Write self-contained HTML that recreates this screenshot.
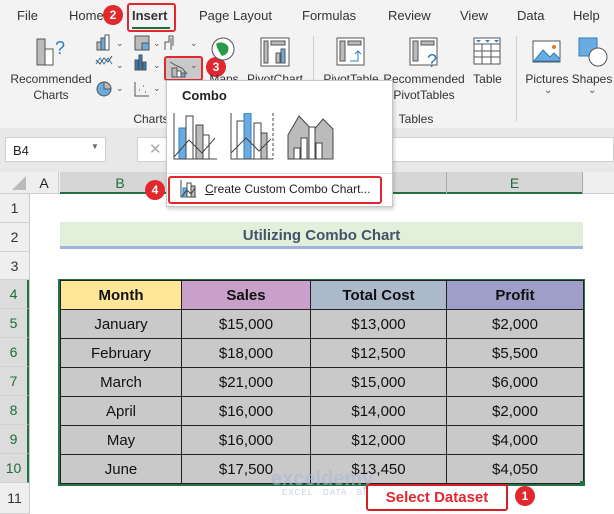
<!DOCTYPE html>
<html><head><style>
*{margin:0;padding:0;box-sizing:border-box}
body{width:614px;height:514px;overflow:hidden;background:#fff;font-family:"Liberation Sans",sans-serif;position:relative;color:#222}
.a{position:absolute}
.tab{position:absolute;top:8px;font-size:13px;color:#333}
.lbl{position:absolute;font-size:12px;color:#333;text-align:center;line-height:16px}
.badge{position:absolute;width:20px;height:20px;border-radius:50%;background:#e0282e;color:#fff;font-weight:bold;font-size:12px;text-align:center;line-height:20px}
.rh{position:absolute;left:0;width:29px;background:#efefef;border-bottom:1px solid #d0d0d0;font-size:14px;color:#333;text-align:center}
.rh.s{color:#1f6b3a;background:#dcdcdc;border-right:2px solid #217346}
.ch{position:absolute;font-size:9px;color:#555}
table{position:absolute;left:60px;top:280px;border-collapse:collapse;font-size:15px}
td{border:1px solid #222;text-align:center;height:29px;background:#c9c9c9;color:#111}
th{border:1px solid #222;height:29px;font-size:15px;color:#111}
</style></head><body>
<div class="a" style="left:0;top:0;width:614px;height:128px;background:#f3f3f3"></div>
<div class="tab" style="left:17px">File</div>
<div class="tab" style="left:69px">Home</div>
<div class="tab" style="left:132px;font-weight:bold">Insert</div>
<div class="a" style="left:132px;top:27px;width:38px;height:2px;background:#1f6b3a"></div>
<div class="a" style="left:127px;top:3px;width:49px;height:29px;border:2px solid #e0282e;border-radius:3px"></div>
<div class="badge" style="left:103px;top:5px">2</div>
<div class="tab" style="left:199px">Page Layout</div>
<div class="tab" style="left:302px">Formulas</div>
<div class="tab" style="left:388px">Review</div>
<div class="tab" style="left:460px">View</div>
<div class="tab" style="left:517px">Data</div>
<div class="tab" style="left:573px">Help</div>
<svg class="a" style="left:35px;top:36px" width="32" height="32"><rect x="2" y="3" width="8" height="26" fill="#bbb" stroke="#555"/><rect x="10" y="13" width="8" height="16" fill="#fff" stroke="#555"/><text x="20" y="18" font-size="18" fill="#2e7dc4" font-family="Liberation Sans">?</text></svg>
<div class="lbl" style="left:6px;top:71px;width:90px">Recommended<br>Charts</div>
<svg class="a" style="left:95px;top:34px" width="80" height="70" stroke="#555" fill="none">
<rect x="2" y="8" width="4" height="8" fill="#bbb"/><rect x="6" y="4" width="4" height="12" fill="#6aabe0"/><rect x="10" y="1" width="4" height="15" fill="#fff"/>
<path d="M1 30 L5 24 L9 30 L13 24 L17 30" stroke="#2e7dc4"/><path d="M1 26 L5 30 L9 24 L13 28 L17 22" stroke="#555"/>
<circle cx="9" cy="55" r="7" fill="#6aabe0"/><path d="M9 48 V55 H16 A7 7 0 0 0 9 48Z" fill="#bbb"/>
<rect x="40" y="2" width="14" height="14" fill="#bbb"/><rect x="47" y="9" width="7" height="7" fill="#6aabe0"/>
<rect x="40" y="26" width="3" height="10" fill="#2e7dc4"/><rect x="44" y="21" width="3" height="15" fill="#2e7dc4"/><rect x="48" y="28" width="3" height="8" fill="#2e7dc4"/>
<path d="M40 48 V62 H54"/><path d="M44 56 h1 M48 52 h1 M50 58 h1" stroke="#6aabe0" stroke-width="2"/>
<path d="M76 4 V16 M70 16 V8 H74 V2 H78 V12" />
</svg>
<div class="ch" style="left:116px;top:38px">⌄</div><div class="ch" style="left:116px;top:60px">⌄</div><div class="ch" style="left:116px;top:83px">⌄</div>
<div class="ch" style="left:153px;top:38px">⌄</div><div class="ch" style="left:153px;top:60px">⌄</div><div class="ch" style="left:153px;top:83px">⌄</div>
<div class="ch" style="left:190px;top:38px">⌄</div>
<div class="lbl" style="left:131px;top:111px;width:40px">Charts</div>
<div class="a" style="left:164px;top:56px;width:39px;height:25px;background:#c9c9c9;border:2px solid #e0282e;border-radius:3px"></div>
<svg class="a" style="left:169px;top:60px" width="20" height="18" stroke="#555" fill="none"><path d="M1 2 L8 6 L13 8 L18 14"/><rect x="3" y="8" width="5" height="9" fill="#bbb"/><rect x="8" y="11" width="4" height="6" fill="#fff"/><rect x="12" y="13" width="4" height="4" fill="#6aabe0"/></svg>
<div class="ch" style="left:190px;top:60px">⌄</div>
<div class="badge" style="left:206px;top:57px">3</div>
<svg class="a" style="left:210px;top:36px" width="26" height="26"><circle cx="13" cy="13" r="11" fill="#fff" stroke="#555"/><path d="M6 8 Q12 4 18 10 Q20 18 12 20 Q8 15 6 8Z" fill="#2a9a4a"/></svg>
<div class="lbl" style="left:208px;top:71px;width:32px">Maps</div>
<svg class="a" style="left:260px;top:37px" width="32" height="32" stroke="#555" fill="none"><rect x="1" y="1" width="28" height="28" fill="#fff"/><rect x="4" y="4" width="4" height="22" fill="#bbb"/><rect x="11" y="4" width="14" height="4" fill="#bbb"/><rect x="16" y="16" width="4" height="10" fill="#bbb"/><rect x="21" y="12" width="4" height="14" fill="#6aabe0"/></svg>
<div class="lbl" style="left:244px;top:71px;width:62px">PivotChart</div>
<div class="a" style="left:313px;top:36px;width:1px;height:85px;background:#d0d0d0"></div>
<svg class="a" style="left:336px;top:37px" width="30" height="30" stroke="#555" fill="none"><rect x="1" y="1" width="27" height="27" fill="#fff"/><rect x="4" y="4" width="5" height="20" fill="#bbb"/><rect x="12" y="4" width="13" height="4" fill="#bbb"/><path d="M14 24 H22 V14 M19 17 L22 14 L25 17" stroke="#2e7dc4"/></svg>
<div class="lbl" style="left:320px;top:71px;width:62px">PivotTable</div>
<svg class="a" style="left:409px;top:37px" width="32" height="32" stroke="#555" fill="none"><rect x="1" y="1" width="27" height="27" fill="#fff"/><rect x="4" y="4" width="5" height="20" fill="#bbb"/><rect x="12" y="4" width="13" height="4" fill="#bbb"/><text x="18" y="30" font-size="18" fill="#2e7dc4" stroke="none" font-family="Liberation Sans">?</text></svg>
<div class="lbl" style="left:383px;top:71px;width:82px;background:#f3f3f3">Recommended<br>PivotTables</div>
<svg class="a" style="left:473px;top:37px" width="28" height="28" stroke="#555" fill="#fff"><rect x="1" y="1" width="26" height="26"/><path d="M1 7 H27 M1 14 H27 M1 20 H27 M9 7 V27 M18 7 V27"/><path d="M3 3 h5 l-2.5 2.5z M12 3 h5 l-2.5 2.5z M21 3 h5 l-2.5 2.5z" fill="#2e7dc4" stroke="none"/></svg>
<div class="lbl" style="left:470px;top:71px;width:35px">Table</div>
<div class="lbl" style="left:396px;top:111px;width:40px">Tables</div>
<div class="a" style="left:516px;top:36px;width:1px;height:85px;background:#d0d0d0"></div>
<svg class="a" style="left:532px;top:40px" width="30" height="24"><rect x="1" y="1" width="27" height="21" fill="#fff" stroke="#555"/><path d="M2 21 L11 10 L18 17 L22 13 L28 19 V21Z" fill="#6aabe0" stroke="#2e7dc4"/><circle cx="22" cy="7" r="2" fill="#e07a20"/></svg>
<div class="lbl" style="left:525px;top:71px;width:44px">Pictures</div>
<div class="a" style="left:544px;top:85px;font-size:10px;color:#555">⌄</div>
<svg class="a" style="left:578px;top:37px" width="30" height="30"><rect x="1" y="1" width="18" height="18" fill="#6aabe0" stroke="#2e7dc4"/><circle cx="20" cy="20" r="9" fill="#fff" stroke="#555"/></svg>
<div class="lbl" style="left:571px;top:71px;width:42px">Shapes</div>
<div class="a" style="left:588px;top:85px;font-size:10px;color:#555">⌄</div>
<div class="a" style="left:0;top:128px;width:614px;height:44px;background:#e8e8e8"></div>
<div class="a" style="left:5px;top:137px;width:101px;height:25px;background:#fff;border:1px solid #d0d0d0;font-size:13px;padding:5px 7px">B4</div>
<div class="a" style="left:91px;top:142px;font-size:8px;color:#666">▼</div>
<div class="a" style="left:137px;top:137px;width:477px;height:25px;background:#fff;border:1px solid #d0d0d0"></div>
<div class="a" style="left:149px;top:140px;font-size:15px;color:#aaa">✕</div>
<div class="a" style="left:0;top:172px;width:614px;height:22px;background:#efefef;border-bottom:1px solid #ccc"></div>
<div class="a" style="left:30px;top:172px;width:29px;height:22px;text-align:center;font-size:14px;line-height:22px;border-right:1px solid #ccc">A</div>
<div class="a" style="left:60px;top:172px;width:522px;height:22px;background:#d6d6d6;border-bottom:2px solid #217346"></div>
<div class="a" style="left:60px;top:172px;width:121px;height:22px;text-align:center;font-size:14px;line-height:22px;color:#1f6b3a;border-right:1px solid #aaa">B</div>
<div class="a" style="left:446px;top:172px;width:137px;height:22px;text-align:center;font-size:14px;line-height:22px;color:#1f6b3a;border-left:1px solid #aaa;border-right:1px solid #aaa">E</div>
<svg class="a" style="left:12px;top:176px" width="14" height="14"><path d="M14 0 V14 H0Z" fill="#bbb"/></svg>
<div class="a" style="left:29px;top:194px;width:1px;height:320px;background:#ccc"></div>
<div class="rh" style="top:194px;height:29px;line-height:29px">1</div>
<div class="rh" style="top:223px;height:29px;line-height:29px">2</div>
<div class="rh" style="top:252px;height:28px;line-height:28px">3</div>
<div class="rh s" style="top:280px;height:29px;line-height:29px">4</div>
<div class="rh s" style="top:309px;height:29px;line-height:29px">5</div>
<div class="rh s" style="top:338px;height:29px;line-height:29px">6</div>
<div class="rh s" style="top:367px;height:29px;line-height:29px">7</div>
<div class="rh s" style="top:396px;height:29px;line-height:29px">8</div>
<div class="rh s" style="top:425px;height:29px;line-height:29px">9</div>
<div class="rh s" style="top:454px;height:29px;line-height:29px">10</div>
<div class="rh" style="top:483px;height:31px;line-height:31px">11</div>
<div class="a" style="left:60px;top:222px;width:523px;height:27px;background:#e2efda;border-bottom:3px solid #9eb4de;text-align:center;font-size:15px;font-weight:bold;line-height:27px;color:#44546a">Utilizing Combo Chart</div>
<div class="a" style="left:58px;top:279px;width:527px;height:207px;border:2px solid #217346"></div>
<table>
<tr><th style="width:121px;background:#ffe699">Month</th><th style="width:129px;background:#c9a0c9">Sales</th><th style="width:136px;background:#acb9ca">Total Cost</th><th style="width:137px;background:#9e9ec8">Profit</th></tr>
<tr><td>January</td><td>$15,000</td><td>$13,000</td><td>$2,000</td></tr>
<tr><td>February</td><td>$18,000</td><td>$12,500</td><td>$5,500</td></tr>
<tr><td>March</td><td>$21,000</td><td>$15,000</td><td>$6,000</td></tr>
<tr><td>April</td><td>$16,000</td><td>$14,000</td><td>$2,000</td></tr>
<tr><td>May</td><td>$16,000</td><td>$12,000</td><td>$4,000</td></tr>
<tr><td>June</td><td>$17,500</td><td>$13,450</td><td>$4,050</td></tr>
</table>
<div class="a" style="left:580px;top:481px;width:5px;height:5px;background:#217346"></div>
<div class="a" style="left:282px;top:488px;font-size:8px;color:#c8d0dc;letter-spacing:1px">EXCEL · DATA · BI</div>
<div class="a" style="left:271px;top:468px;font-size:20px;font-weight:bold;color:rgba(170,185,215,.6)">exceldemy</div>
<div class="a" style="left:366px;top:484px;width:142px;height:27px;background:#fff;border:2px solid #d32027;border-radius:3px;color:#e0282e;font-weight:bold;font-size:15px;text-align:center;line-height:23px">Select Dataset</div>
<div class="badge" style="left:515px;top:486px">1</div>
<div class="a" style="left:166px;top:80px;width:227px;height:127px;background:#fff;border:1px solid #c6c6c6;box-shadow:1px 2px 4px rgba(0,0,0,.2)"></div>
<div class="a" style="left:182px;top:88px;font-size:13px;font-weight:bold;color:#222">Combo</div>
<svg class="a" style="left:173px;top:113px" width="220" height="48" stroke="#444" fill="none">
<rect x="6" y="15" width="7" height="31" fill="#6aabe0" stroke="#2e7dc4"/><rect x="13" y="3" width="7" height="43" fill="#fff"/><rect x="23" y="12" width="7" height="34" fill="#bbb"/><rect x="30" y="22" width="6" height="24" fill="#fff"/>
<path d="M1 44 L16 27 L29 40 L42 25"/><path d="M1 0 V46 H44"/>
<rect x="64" y="8" width="7" height="38" fill="#fff"/><rect x="71" y="0" width="7" height="46" fill="#6aabe0" stroke="#2e7dc4"/><rect x="81" y="10" width="7" height="36" fill="#fff"/><rect x="88" y="20" width="6" height="26" fill="#bbb"/>
<path d="M58 40 L73 25 L86 38 L98 26"/><path d="M58 0 V46 H100"/><path d="M100 0 V46" stroke-dasharray="3 2"/>
<path d="M115 46 V22 L126 3 L140 18 L150 6 L160 16 V46Z" fill="#bbb"/><rect x="121" y="35" width="6" height="11" fill="#fff"/><rect x="128" y="25" width="6" height="21" fill="#fff"/><rect x="136" y="14" width="6" height="32" fill="#fff"/><rect x="143" y="30" width="6" height="16" fill="#fff"/>
</svg>
<div class="a" style="left:167px;top:173px;width:225px;height:1px;background:#e0e0e0"></div>
<div class="a" style="left:168px;top:176px;width:214px;height:28px;border:2px solid #e0282e;border-radius:3px"></div>
<svg class="a" style="left:180px;top:180px" width="16" height="18" stroke="#444" fill="none"><path d="M1 0 V17 H16"/><rect x="3" y="8" width="4" height="9" fill="#6aabe0" stroke="#2e7dc4"/><rect x="7" y="3" width="4" height="14" fill="#fff"/><rect x="11" y="6" width="4" height="11" fill="#bbb"/><path d="M2 16 L7 10 L11 14 L15 8"/></svg>
<div class="a" style="left:205px;top:182px;font-size:12px;color:#222"><u>C</u>reate Custom Combo Chart...</div>
<div class="badge" style="left:145px;top:180px">4</div>
</body></html>
